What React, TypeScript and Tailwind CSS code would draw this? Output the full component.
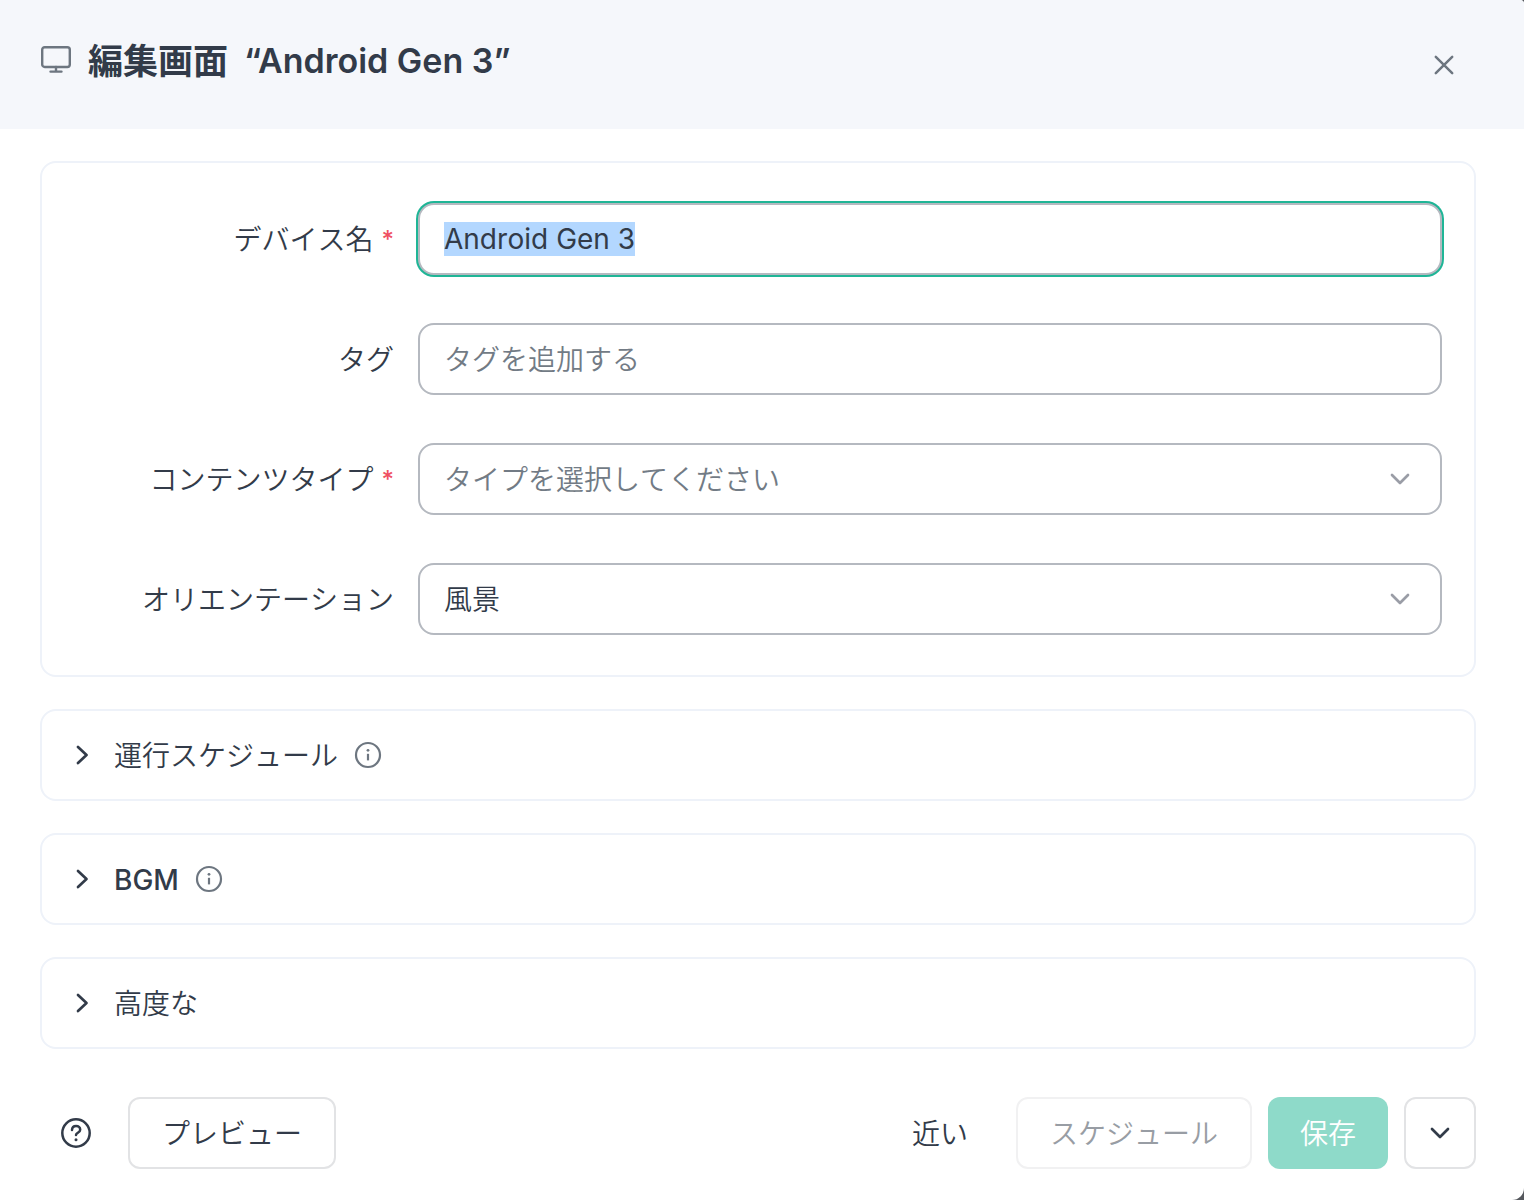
import { useEffect, useRef, type ReactNode } from "react";

const FONT = 'font-[Inter,"Noto_Sans_CJK_JP",sans-serif] [font-kerning:none]';
const FIELD =
  "h-18 w-full rounded-2xl border-2 border-[#b5b9c0] bg-white px-6 text-[28px] text-[#323b49] outline-none placeholder:text-[#727b85] placeholder:opacity-100";

type IconProps = { className: string };

function MonitorIcon({ className }: IconProps) {
  return (
    <svg className={className} viewBox="0 0 32 32" fill="none" stroke="currentColor" strokeWidth="2.4" strokeLinecap="round" strokeLinejoin="round" aria-hidden="true">
      <rect x="2.2" y="2.2" width="27.6" height="19.8" rx="2.5" />
      <path d="M16 22v4.600M10.500 26.600h11" />
    </svg>
  );
}

function CloseIcon({ className }: IconProps) {
  return (
    <svg className={className} viewBox="0 0 24 24" fill="none" stroke="currentColor" strokeWidth="2.5" strokeLinecap="round" aria-hidden="true">
      <path d="M3.8 3.8l16.4 16.4M20.2 3.8L3.8 20.2" />
    </svg>
  );
}

function ChevronDownIcon({ className }: IconProps) {
  return (
    <svg className={className} viewBox="0 0 24 24" fill="none" stroke="currentColor" strokeWidth="2.7" strokeLinecap="round" strokeLinejoin="round" aria-hidden="true">
      <path d="M4 8l8 8 8-8" />
    </svg>
  );
}

function ChevronRightIcon({ className }: IconProps) {
  return (
    <svg className={className} viewBox="0 0 24 24" fill="none" stroke="currentColor" strokeWidth="2.7" strokeLinecap="round" strokeLinejoin="round" aria-hidden="true">
      <path d="M8 4l8.500 8L8 20" />
    </svg>
  );
}

function InfoIcon({ className }: IconProps) {
  return (
    <svg className={className} viewBox="0 0 28 28" fill="none" stroke="currentColor" strokeWidth="2.2" aria-hidden="true">
      <circle cx="14" cy="14" r="12" />
      <path d="M14 12.800v6.600" />
      <circle cx="14" cy="9.300" r="1.400" fill="currentColor" stroke="none" />
    </svg>
  );
}

function HelpIcon({ className }: IconProps) {
  return (
    <svg className={className} viewBox="0 0 32 32" fill="none" stroke="currentColor" strokeWidth="2.5" strokeLinecap="round" strokeLinejoin="round" aria-hidden="true">
      <circle cx="16" cy="16" r="13.7" />
      <path d="M12 13c.1-2.400 1.800-4 4.100-4 2.300 0 4.100 1.500 4.100 3.700 0 3-4.200 3-4.200 5.300" />
      <circle cx="16" cy="22.800" r="1.500" fill="currentColor" stroke="none" />
    </svg>
  );
}

function Row({ id, label, required, children }: { id: string; label: string; required?: boolean; children: ReactNode }) {
  return (
    <div className="grid grid-cols-[minmax(0,352fr)_minmax(0,1024fr)] items-center gap-6">
      <label htmlFor={id} className="flex items-center justify-end gap-2 pt-0.5 text-[28px] font-[350] whitespace-nowrap">
        {label}
        {required && <span className="text-2xl font-medium text-[#ef5062]">*</span>}
      </label>
      {children}
    </div>
  );
}

function SelectBox({ id, options, muted }: { id: string; options: string[]; muted?: boolean }) {
  return (
    <div className="relative">
      <select id={id} className={`${FIELD} appearance-none pt-0.5 pr-18 font-[350] ${muted ? "text-[#727b85]!" : ""}`}>
        {options.map((option) => (
          <option key={option}>{option}</option>
        ))}
      </select>
      <ChevronDownIcon className="pointer-events-none absolute top-6 right-7.5 size-6 text-[#9a9da6]" />
    </div>
  );
}

function Section({ title, info, strong }: { title: string; info?: boolean; strong?: boolean }) {
  return (
    <section className="rounded-2xl border-2 border-[#eef2f9]">
      <div className="flex h-22 items-center px-7">
        <button type="button" aria-expanded="false" className="flex items-center gap-5 text-[28px]">
          <ChevronRightIcon className="size-6" />
          <span className={strong ? "pt-0.5 font-medium" : "pt-0.5 font-[350]"}>{title}</span>
        </button>
        {info && (
          <button type="button" aria-label={`${title} info`} className="ml-4 text-[#6d7680]">
            <InfoIcon className="size-7" />
          </button>
        )}
      </div>
    </section>
  );
}

export default function App() {
  const nameRef = useRef<HTMLInputElement>(null);

  useEffect(() => {
    nameRef.current?.focus();
    nameRef.current?.select();
  }, []);

  return (
    <div className={`${FONT} min-h-screen bg-[#55585d] text-[#323b49]`}>
      <main className="flex min-h-screen flex-col overflow-hidden rounded-tr-sm rounded-br-xl bg-white">
        <header className="flex h-[129px] items-center justify-between bg-[#f5f7fb] pr-17 pl-10">
          <div className="flex items-center gap-4 pb-2">
            <MonitorIcon className="size-8 text-[#6d7680]" />
            <h1 className="flex items-center gap-4 leading-14">
              <span className="text-[35px] font-bold">編集画面</span>
              <span className="text-[34px] font-semibold [font-kerning:normal]">“Android Gen 3”</span>
            </h1>
          </div>
          <button type="button" aria-label="閉じる" className="text-[#6d7680]">
            <CloseIcon className="size-6" />
          </button>
        </header>

        <form className="flex flex-col gap-8 pt-8 pr-12 pb-[31px] pl-10" onSubmit={(event) => event.preventDefault()}>
          <div className="flex flex-col gap-12 rounded-2xl border-2 border-[#eef2f9] py-10 pr-8">
            <Row id="device-name" label="デバイス名" required>
              <input
                id="device-name"
                ref={nameRef}
                defaultValue="Android Gen 3"
                required
                className={`${FIELD} ring-[#1fb596] selection:bg-[#b3d7ff] selection:text-[#323b49] focus:ring-2`}
              />
            </Row>
            <Row id="tags" label="タグ">
              <input id="tags" placeholder="タグを追加する" className={`${FIELD} pt-0.5 font-[350]`} />
            </Row>
            <Row id="content-type" label="コンテンツタイプ" required>
              <SelectBox id="content-type" options={["タイプを選択してください"]} muted />
            </Row>
            <Row id="orientation" label="オリエンテーション">
              <SelectBox id="orientation" options={["風景"]} />
            </Row>
          </div>

          <Section title="運行スケジュール" info />
          <Section title="BGM" info strong />
          <Section title="高度な" />

          <footer className="mt-4 flex items-center justify-between text-[28px] font-[350]">
            <div className="flex items-center gap-9 pl-5">
              <button type="button" aria-label="ヘルプ">
                <HelpIcon className="size-8" />
              </button>
              <button type="button" className="h-18 rounded-xl border-2 border-[#e2e3e5] px-8 pt-0.5">プレビュー</button>
            </div>
            <div className="flex items-center gap-4">
              <button type="button" className="mr-8 pt-0.5">近い</button>
              <button type="button" disabled className="h-18 rounded-xl border-2 border-[#f1f1f2] px-8 pt-0.5 text-[#989da4]">スケジュール</button>
              <button type="button" disabled className="h-18 rounded-xl bg-[#8edac9] px-8 pt-0.5 text-white">保存</button>
              <button type="button" aria-label="その他の保存オプション" className="flex size-18 items-center justify-center rounded-xl border-2 border-[#e2e3e5]">
                <ChevronDownIcon className="size-6" />
              </button>
            </div>
          </footer>
        </form>
      </main>
    </div>
  );
}
